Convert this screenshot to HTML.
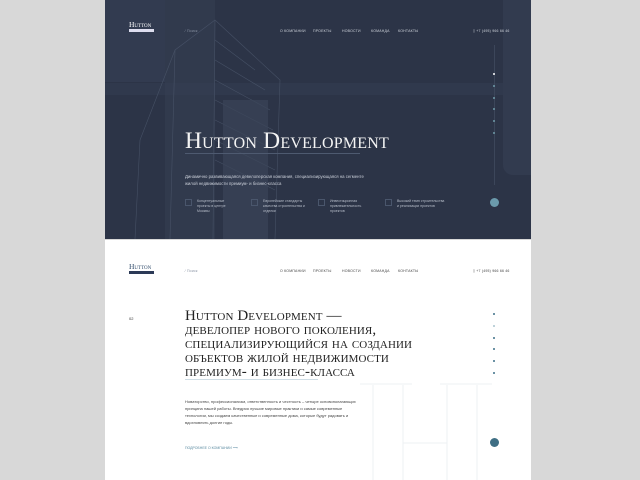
<!DOCTYPE html>
<html><head><meta charset="utf-8"><style>
*{margin:0;padding:0;box-sizing:border-box}
body{width:640px;height:480px;background:#d8d8d8;position:relative;overflow:hidden;font-family:"Liberation Sans",sans-serif}
.a{position:absolute}
.dark{left:105px;top:0;width:426px;height:239px;background:#2c3447;overflow:hidden}
.white{left:105px;top:240px;width:426px;height:240px;background:#fff;overflow:hidden}
.serif{font-family:"Liberation Serif",serif;font-variant:small-caps}
.nav{font-size:3.5px;letter-spacing:.2px;white-space:nowrap;top:29px}
</style></head><body>
<div class="a dark">
  <div class="a" style="left:0;top:0;width:60px;height:82px;background:#323b50"></div>
  <div class="a" style="left:0;top:83px;width:426px;height:12px;background:#343d52;opacity:.6"></div>
  <div class="a" style="left:60px;top:0;width:50px;height:239px;background:#364054;opacity:.5"></div>
  <div class="a" style="left:398px;top:0;width:28px;height:175px;background:#323b4f;border-radius:0 0 0 10px"></div>
  <svg class="a" style="left:0;top:0" width="426" height="239">
    <g stroke="#4c576c" stroke-width=".6" fill="none" opacity=".8">
      <path d="M35 140 L70 50 L110 20 L175 80 L170 239"/>
      <path d="M35 140 L30 239 M70 50 L65 239 M110 20 L108 239"/>
      <path d="M110 40 L150 70 M110 60 L160 90 M110 80 L165 110 M110 100 L168 130 M110 120 L170 150 M110 140 L170 170 M110 160 L170 190"/>
    </g>
    <g fill="#3a4459" opacity=".7">
      <rect x="118" y="100" width="45" height="139"/>
    </g>
  </svg>
  <div class="a serif" style="left:24px;top:20px;font-size:7.5px;color:#fff">Hutton</div>
  <div class="a" style="left:24px;top:29px;width:25px;height:3px;background:#dde"></div>
  <div class="a nav" style="left:80px;color:#8a93a4">⁄ Поиск</div>
  <div class="a nav" style="left:175px;color:#cfd4dc">О КОМПАНИИ</div>
  <div class="a nav" style="left:208px;color:#cfd4dc">ПРОЕКТЫ</div>
  <div class="a nav" style="left:237px;color:#cfd4dc">НОВОСТИ</div>
  <div class="a nav" style="left:266px;color:#cfd4dc">КОМАНДА</div>
  <div class="a nav" style="left:293px;color:#cfd4dc">КОНТАКТЫ</div>
  <div class="a nav" style="left:368px;color:#cfd4dc">▯ +7 (495) 966 66 46</div>
  <div class="a serif" style="left:80px;top:128px;font-size:23.5px;color:#f4f4f4;letter-spacing:.2px;white-space:nowrap">Hutton Development</div>
  <div class="a" style="left:80px;top:153px;width:175px;height:1px;background:#4e5a70"></div>
  <div class="a" style="left:80px;top:173px;font-size:4.3px;line-height:7px;color:#c9ced8;width:180px">Динамично развивающаяся девелоперская компания, специализирующаяся на сегменте жилой недвижимости премиум- и бизнес-класса</div>
  <div class="a" style="left:80px;top:199px;width:330px;font-size:3.5px;line-height:5px;color:#b6bcc8">
    <div class="a" style="left:0"><span style="position:absolute;left:0;top:0;width:7px;height:7px;border:1px solid #4a566c"></span><span style="position:absolute;left:12px;width:30px">Концептуальные проекты в центре Москвы</span></div>
    <div class="a" style="left:66px"><span style="position:absolute;left:0;top:0;width:7px;height:7px;border:1px solid #4a566c"></span><span style="position:absolute;left:12px;width:42px">Европейские стандарты качества строительства и отделки</span></div>
    <div class="a" style="left:133px"><span style="position:absolute;left:0;top:0;width:7px;height:7px;border:1px solid #4a566c"></span><span style="position:absolute;left:12px;width:34px">Инвестиционная привлекательность проектов</span></div>
    <div class="a" style="left:200px"><span style="position:absolute;left:0;top:0;width:7px;height:7px;border:1px solid #4a566c"></span><span style="position:absolute;left:12px;width:50px">Высокий темп строительства и реализации проектов</span></div>
  </div>
  <div class="a" style="left:389px;top:45px;width:1px;height:140px;background:#3c465a"></div>
  <div class="a" style="left:388px;top:73px;width:2px;height:2px;background:#fff;border-radius:1px"></div>
  <div class="a" style="left:388px;top:85px;width:2px;height:2px;background:#6f9aa8;border-radius:1px"></div>
  <div class="a" style="left:388px;top:97px;width:2px;height:2px;background:#6f9aa8;border-radius:1px"></div>
  <div class="a" style="left:388px;top:108px;width:2px;height:2px;background:#6f9aa8;border-radius:1px"></div>
  <div class="a" style="left:388px;top:120px;width:2px;height:2px;background:#6f9aa8;border-radius:1px"></div>
  <div class="a" style="left:388px;top:132px;width:2px;height:2px;background:#6f9aa8;border-radius:1px"></div>
  <div class="a" style="left:385px;top:198px;width:9px;height:9px;border-radius:50%;background:#6b9aac"></div>
</div>
<div class="a white">
  <svg class="a" style="left:250px;top:143px" width="140" height="100"><g fill="none" stroke="#eef1f3" stroke-width="1"><path d="M5 1 H57 M85 1 H137 M18 2 V100 M48 2 V100 M92 2 V100 M122 2 V100 M48 60 H92"/></g></svg>
  <div class="a serif" style="left:24px;top:22px;font-size:7.5px;color:#2f4a6a">Hutton</div>
  <div class="a" style="left:24px;top:31px;width:25px;height:3px;background:#2c3a57"></div>
  <div class="a nav" style="left:80px;color:#8a93a4">⁄ Поиск</div>
  <div class="a nav" style="left:175px;color:#444">О КОМПАНИИ</div>
  <div class="a nav" style="left:208px;color:#444">ПРОЕКТЫ</div>
  <div class="a nav" style="left:237px;color:#444">НОВОСТИ</div>
  <div class="a nav" style="left:266px;color:#444">КОМАНДА</div>
  <div class="a nav" style="left:293px;color:#444">КОНТАКТЫ</div>
  <div class="a nav" style="left:368px;color:#444">▯ +7 (495) 966 66 46</div>
  <div class="a" style="left:24px;top:76px;font-size:4px;color:#333">02</div>
  <div class="a serif" style="left:80px;top:69px;font-size:15px;line-height:14px;color:#222;letter-spacing:.1px;white-space:nowrap">Hutton Development —<br>девелопер нового поколения,<br>специализирующийся на создании<br>объектов жилой недвижимости<br>премиум- и бизнес-класса</div>
  <div class="a" style="left:80px;top:139px;width:133px;height:1px;background:#cfdde5"></div>
  <div class="a" style="left:80px;top:158px;width:175px;font-size:4px;line-height:7px;color:#444">Новаторство, профессионализм, ответственность и честность – четыре основополагающих принципа нашей работы. Внедряя лучшие мировые практики и самые современные технологии, мы создаем качественные и современные дома, которые будут радовать и вдохновлять долгие годы.</div>
  <div class="a" style="left:80px;top:206px;font-size:3.5px;color:#5a8aa0">ПОДРОБНЕЕ О КОМПАНИИ ⟶</div>
  <div class="a" style="left:388px;top:73px;width:2px;height:2px;background:#3d6f88;border-radius:1px"></div>
  <div class="a" style="left:388px;top:85px;width:2px;height:2px;background:#a9c4cf;border-radius:1px"></div>
  <div class="a" style="left:388px;top:97px;width:2px;height:2px;background:#3d6f88;border-radius:1px"></div>
  <div class="a" style="left:388px;top:108px;width:2px;height:2px;background:#3d6f88;border-radius:1px"></div>
  <div class="a" style="left:388px;top:120px;width:2px;height:2px;background:#3d6f88;border-radius:1px"></div>
  <div class="a" style="left:388px;top:132px;width:2px;height:2px;background:#3d6f88;border-radius:1px"></div>
  <div class="a" style="left:385px;top:198px;width:9px;height:9px;border-radius:50%;background:#3f6f84"></div>
</div>
</body></html>
